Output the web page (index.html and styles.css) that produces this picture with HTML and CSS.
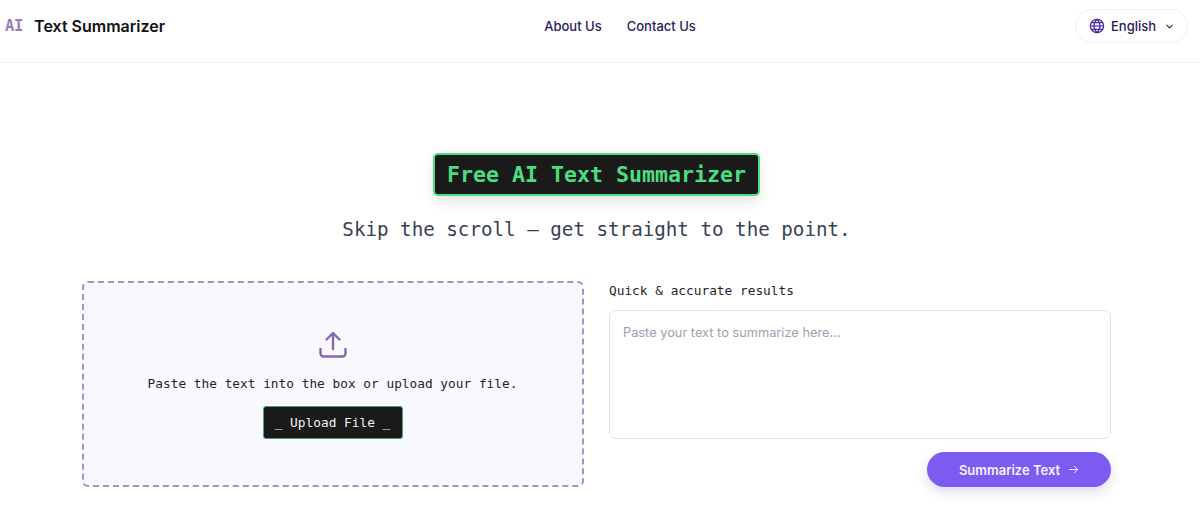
FILE: index.html
```html
<!DOCTYPE html>
<html lang="en">
<head>
<meta charset="utf-8">
<title>AI Text Summarizer</title>
<link rel="stylesheet" href="styles.css">
</head>
<body>
<header class="site-header">
  <a class="brand" href="#"><span class="brand-mark">AI</span><span class="brand-name">Text Summarizer</span></a>
  <nav class="main-nav"><a href="#">About Us</a><a href="#">Contact Us</a></nav>
  <button class="lang" type="button">
    <svg class="globe" viewBox="0 0 24 24" fill="none" stroke="currentColor" stroke-width="1.8"><circle cx="12" cy="12" r="10"/><path d="M2 12h20"/><path d="M3.4 7h17.2M3.4 17h17.2"/><path d="M12 2c3 2.8 4.5 6.2 4.5 10S15 19.200 12 22c-3-2.800-4.500-6.200-4.500-10S9 4.800 12 2z"/></svg>
    <span>English</span>
    <svg class="chev" viewBox="0 0 24 24" fill="none" stroke="currentColor" stroke-width="2.2" stroke-linecap="round" stroke-linejoin="round"><path d="M6 9l6 6 6-6"/></svg>
  </button>
</header>
<main class="page">
  <section class="hero">
    <h1 class="badge">Free AI Text Summarizer</h1>
    <p class="tagline">Skip the scroll — get straight to the point.</p>
  </section>
  <section class="tool">
    <div class="drop">
      <svg class="upload-icon" viewBox="0 0 28 28" fill="none" stroke="currentColor" stroke-width="2.400" stroke-linecap="round" stroke-linejoin="round"><path d="M14 18V2.500"/><path d="M7.500 8.500L14 2.200l6.500 6.300"/><path d="M1.500 18v4.500a3 3 0 0 0 3 3h19a3 3 0 0 0 3-3V18"/></svg>
      <p class="drop-text">Paste the text into the box or upload your file.</p>
      <button class="upload-btn" type="button">_ Upload File _</button>
    </div>
    <div class="input-col">
      <label class="input-label" for="t">Quick &amp; accurate results</label>
      <textarea id="t" class="input" placeholder="Paste your text to summarize here..."></textarea>
      <div class="actions">
        <button class="go" type="button">Summarize Text
          <svg class="arrow" viewBox="0 0 24 24" fill="none" stroke="currentColor" stroke-width="2" stroke-linecap="round" stroke-linejoin="round"><path d="M3 12h18"/><path d="M14 5l7 7-7 7"/></svg>
        </button>
      </div>
    </div>
  </section>
</main>
</body>
</html>
```
FILE: styles.css
```css
* { box-sizing: border-box; }
html, body { margin: 0; height: 100%; }
body { background: #fff; font-family: Inter, "Liberation Sans", sans-serif; color: #111; overflow: hidden; }
a { text-decoration: none; color: inherit; }
button { font-family: inherit; cursor: pointer; }

.site-header {
  height: 63px;
  border-bottom: 1px solid #f1f1f3;
  display: flex;
  justify-content: space-between;
  align-items: center;
  padding: 0 12px 10px 5px;
}
.brand { display: flex; align-items: center; gap: 11px; }
.brand-mark { font-family: "DejaVu Sans Mono", monospace; font-size: 15.500px; font-weight: 700; color: #9580bd; letter-spacing: -0.300px; }
.brand-name { font-size: 16px; font-weight: 600; color: #111; }
.main-nav { display: flex; gap: 25px; font-size: 13px; font-weight: 500; color: #2a1a5e; }
.lang {
  display: flex; align-items: center;
  height: 34px; width: 113px; padding: 0 0 0 13px;
  background: #fff; border: 1px solid #f0f0f3; border-radius: 17px;
  font-size: 13px; font-weight: 500; color: #2a1a5e;
}
.globe { width: 16px; height: 16px; color: #4c2a9e; margin-right: 6px; }
.chev { width: 11px; height: 11px; margin-left: 8px; }

.page { width: 1193px; display: flex; flex-direction: column; align-items: center; }
.hero { display: flex; flex-direction: column; align-items: center; padding-top: 90px; }
.badge {
  margin: 0;
  height: 43px; width: 327px;
  display: flex; align-items: center; justify-content: center;
  background: #1a1a1a; border: 2px solid #4ade80; border-radius: 5px;
  box-shadow: 0 6px 14px rgba(0,0,0,.1);
  font-family: "DejaVu Sans Mono", monospace; font-size: 21.600px; font-weight: 700; color: #4ade80;
  white-space: nowrap;
}
.tagline {
  margin: 22px 0 0;
  font-family: "DejaVu Sans Mono", monospace; font-size: 19.200px; line-height: 24px; color: #374151;
}
.tool { width: 1029px; display: grid; grid-template-columns: 502px 502px; gap: 25px; margin-top: 39px; }
.drop {
  height: 206px;
  background: #faf8ff;
  border: 2px dashed #a394c4;
  border-radius: 6px;
  display: flex; flex-direction: column; align-items: center;
  padding: 48px 1px 0 0;
}
.upload-icon { width: 28px; height: 28px; color: #8469ad; }
.drop-text { margin: 16px 0 0; font-family: "DejaVu Sans Mono", monospace; font-size: 12.800px; line-height: 17px; color: #1f2430; }
.upload-btn {
  margin-top: 14px;
  width: 140px; height: 33px;
  background: #1a1a1a; border: 1px solid #46a86c; border-radius: 3px;
  font-family: "DejaVu Sans Mono", monospace; font-size: 12.800px; color: #f4f4f4;
}
.input-col { display: flex; flex-direction: column; }
.input-label { font-family: "DejaVu Sans Mono", monospace; font-size: 12.800px; line-height: 20px; color: #1f2430; }
.input {
  margin-top: 9px;
  height: 129px; width: 100%;
  border: 1px solid #e2e3e8; border-radius: 6px;
  padding: 13px 13px;
  font-family: Inter, sans-serif; font-size: 12.800px; line-height: 18px;
  resize: none; outline: none;
}
.input::placeholder { color: #9ca3af; opacity: 1; }
.actions { display: flex; justify-content: flex-end; margin-top: 13px; }
.go {
  width: 184px; height: 35px;
  display: flex; align-items: center; justify-content: center; gap: 8px;
  background: #7c5cf0; border: 0; border-radius: 18px;
  box-shadow: 0 5px 12px rgba(80,50,160,.18);
  color: #f5f2ff; font-size: 13px; font-weight: 600;
}
.arrow { width: 11px; height: 11px; }
```
